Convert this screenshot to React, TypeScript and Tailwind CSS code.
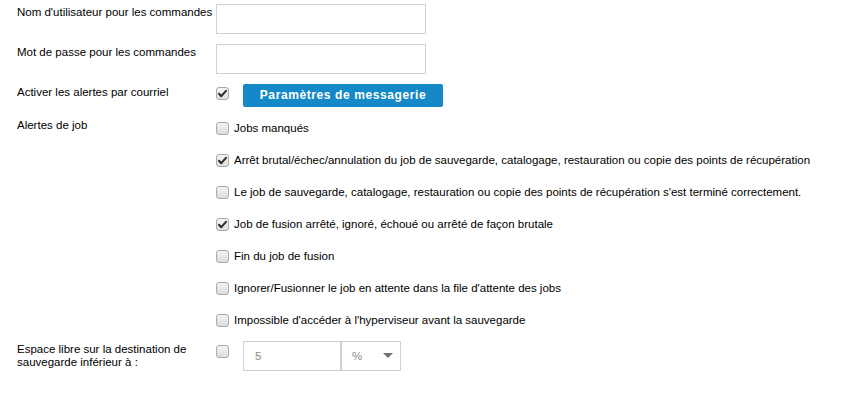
import React from "react";

const font = { fontFamily: '"Liberation Sans", Arial, sans-serif' };

function Check({ checked }: { checked?: boolean }) {
  return (
    <span className="relative inline-block w-[13px] h-[13px] shrink-0 rounded-[3px] border border-[#a9a9a9] bg-gradient-to-b from-[#f4f4f4] to-[#dedede]">
      {checked && (
        <svg viewBox="0 0 13 13" className="absolute left-[-1px] top-[-1px] w-[13px] h-[13px]">
          <path d="M3 6.8 L5.3 9.2 L10 3.8" fill="none" stroke="#2b2b2b" strokeWidth="2" strokeLinecap="round" strokeLinejoin="round" />
        </svg>
      )}
    </span>
  );
}

function CheckRow({ checked, label }: { checked?: boolean; label: string }) {
  return (
    <div className="flex items-center h-[32px]">
      <Check checked={checked} />
      <span className="ml-[5px] whitespace-nowrap">{label}</span>
    </div>
  );
}

export default function App() {
  return (
    <div className="w-[866px] h-[403px] bg-white text-black text-[11.5px] leading-[16px] overflow-hidden" style={font}>
      <div className="pl-[17px] pt-[4px]">
        <div className="flex">
          <div className="w-[199px] whitespace-nowrap">Nom d'utilisateur pour les commandes</div>
          <div className="w-[210px] h-[30px] border border-[#d0d0d0]" />
        </div>
        <div className="flex mt-[10px]">
          <div className="w-[199px] whitespace-nowrap">Mot de passe pour les commandes</div>
          <div className="w-[210px] h-[30px] border border-[#d0d0d0]" />
        </div>
        <div className="flex mt-[10px] h-[23px]">
          <div className="w-[199px]">Activer les alertes par courriel</div>
          <div className="pt-[3px]">
            <Check checked />
          </div>
          <button className="ml-[14px] w-[200px] h-[23px] rounded-[2px] bg-[#1589c8] text-white font-bold tracking-[0.6px] text-[12px] leading-[23px]">
            Paramètres de messagerie
          </button>
        </div>
        <div className="flex mt-[10px]">
          <div className="w-[199px]">Alertes de job</div>
          <div className="-mt-[5px]">
            <CheckRow label="Jobs manqués" />
            <CheckRow checked label="Arrêt brutal/échec/annulation du job de sauvegarde, catalogage, restauration ou copie des points de récupération" />
            <CheckRow label="Le job de sauvegarde, catalogage, restauration ou copie des points de récupération s'est terminé correctement." />
            <CheckRow checked label="Job de fusion arrêté, ignoré, échoué ou arrêté de façon brutale" />
            <CheckRow label="Fin du job de fusion" />
            <CheckRow label="Ignorer/Fusionner le job en attente dans la file d'attente des jobs" />
            <CheckRow label="Impossible d'accéder à l'hyperviseur avant la sauvegarde" />
          </div>
        </div>
        <div className="flex mt-[5px]">
          <div className="w-[199px] leading-[13px] pt-[2px]">
            Espace libre sur la destination de
            <br />
            sauvegarde inférieur à :
          </div>
          <div className="pt-[4px]">
            <Check />
          </div>
          <div className="ml-[14px] flex h-[30px] border border-[#d0d0d0]">
            <div className="w-[98px] pl-[11px] flex items-center text-[#8a8a8a] border-r-[2px] border-[#d0d0d0]">5</div>
            <div className="w-[58px] pl-[10px] pr-[7px] flex items-center justify-between text-[#8a8a8a]">
              <span>%</span>
              <svg width="10" height="6" viewBox="0 0 10 6">
                <path d="M0 0 H10 L5 5 Z" fill="#707070" />
              </svg>
            </div>
          </div>
        </div>
      </div>
    </div>
  );
}
